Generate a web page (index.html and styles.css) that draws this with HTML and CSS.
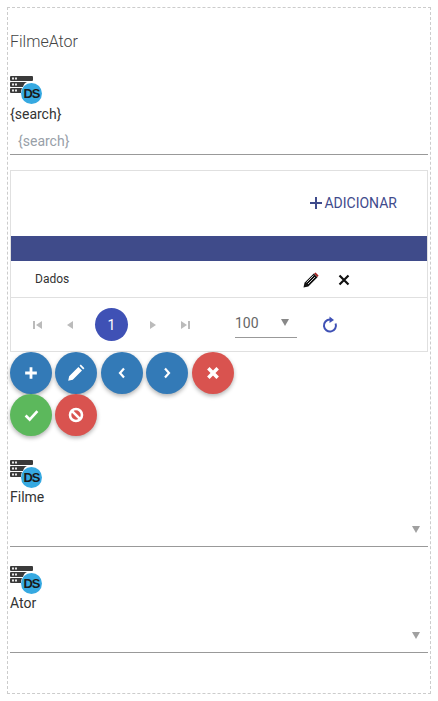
FILE: index.html
```html
<!DOCTYPE html>
<html>

<head>
  <title>FilmeAtor</title>
  <meta name="viewport" content="width=device-width, initial-scale=1.0">
  <link rel="stylesheet" href="styles.css">
</head>

<body>
  <div class="page">
    <h1 class="title">FilmeAtor</h1>

    <div class="field search-field">
      <svg class="ds-icon" viewBox="0 0 33 30">
        <path fill="#3a3a3a" d="M1 1h21q1 0 1 1v3q0 1-1 1H1q-1 0-1-1V2q0-1 1-1zM1 7h16q-3 1-4 5H1q-1 0-1-1V8q0-1 1-1zM1 13h11q-1 2-1 5H1q-1 0-1-1v-3q0-1 1-1z"/>
        <path fill="#e8e8e8" d="M2 2.500h2v2H2zM5 2.500h2v2H5zM2 8.500h2v2H2zM5 8.500h2v2H5zM2 14.500h2v2H2zM5 14.500h2v2H5z"/>
        <circle cx="21.500" cy="18.500" r="10.500" fill="#36a9e1"/>
        <text x="21.500" y="23" text-anchor="middle" class="ds-text">DS</text>
      </svg>
      <label>{search}</label>
      <div class="search-input">{search}</div>
    </div>

    <div class="panel">
      <div class="panel-top">
        <a class="add-link">
          <svg width="12" height="12" viewBox="0 0 12 12"><path d="M5 0h2v5h5v2H7v5H5V7H0V5h5z" fill="#3f4b8c"/></svg>
          ADICIONAR
        </a>
      </div>
      <div class="band"></div>
      <div class="row">
        <span class="row-text">Dados</span>
        <svg class="row-edit" width="16" height="16" viewBox="0 0 16 16">
          <path d="M.500 15.500l1-4.800L10.800 1.500l3.700 3.700-9.200 9.300z" fill="#111"/>
          <path d="M11.800.900l.8-.4 2.900 2.900-.4.900-.7.600-3.300-3.300z" fill="#a3211f"/>
          <path d="M3.500 10.500l7-7M5 12l7-7" stroke="#fff" stroke-width=".8"/>
        </svg>
        <svg class="row-del" width="12" height="12" viewBox="0 0 12 12"><path d="M1.500 1.500l9 9M10.500 1.500l-9 9" stroke="#111" stroke-width="2.200"/></svg>
      </div>
      <div class="pager">
        <svg class="pg-first" width="9" height="8" viewBox="0 0 9 8"><path d="M0 0h2v8H0zM9 0v8L3 4z" fill="#bbb"/></svg>
        <svg class="pg-prev" width="6" height="8" viewBox="0 0 6 8"><path d="M6 0v8L0 4z" fill="#bbb"/></svg>
        <span class="pg-current">1</span>
        <svg class="pg-next" width="6" height="8" viewBox="0 0 6 8"><path d="M0 0v8l6-4z" fill="#bbb"/></svg>
        <svg class="pg-last" width="9" height="8" viewBox="0 0 9 8"><path d="M0 0v8l6-4zM7 0h2v8H7z" fill="#bbb"/></svg>
        <div class="pg-size"><span>100</span><i class="arrow arrow-dark"></i></div>
        <svg class="pg-refresh" width="16" height="18" viewBox="0 0 16 18">
          <path d="M8 3.500A6 6 0 1 0 13.600 7.500" fill="none" stroke="#3f51b5" stroke-width="2"/>
          <path d="M7.500 0.500L12 4 7.500 7z" fill="#3f51b5"/>
        </svg>
      </div>
    </div>

    <div class="buttons">
      <button class="btn btn-blue"><svg width="14" height="14" viewBox="0 0 12 12"><path d="M4.800 1h2.400v3.800H11v2.400H7.200V11H4.800V7.200H1V4.800h3.800z" fill="#fff"/></svg></button>
      <button class="btn btn-blue"><svg width="18" height="18" viewBox="0 0 15 15"><path d="M1 14l.8-3.800L9.500 2.500l3 3-7.700 7.700zM10.500 1.500l1-1 3 3-1 1z" fill="#fff"/></svg></button>
      <button class="btn btn-blue"><svg width="8" height="12" viewBox="0 0 8 12"><path d="M6 1.500L2 6l4 4.500" fill="none" stroke="#fff" stroke-width="2.200"/></svg></button>
      <button class="btn btn-blue"><svg width="8" height="12" viewBox="0 0 8 12"><path d="M2 1.500L6 6l-4 4.500" fill="none" stroke="#fff" stroke-width="2.200"/></svg></button>
      <button class="btn btn-red"><svg width="14" height="14" viewBox="0 0 12 12"><path d="M2 2l8 8M10 2l-8 8" stroke="#fff" stroke-width="3"/></svg></button>
      <button class="btn btn-green"><svg width="15" height="13" viewBox="0 0 14 12"><path d="M1.500 6l3.800 3.800L12.500 2" fill="none" stroke="#fff" stroke-width="2.500"/></svg></button>
      <button class="btn btn-red"><svg width="16" height="16" viewBox="0 0 16 16"><circle cx="8" cy="8" r="6" fill="none" stroke="#fff" stroke-width="2.600"/><path d="M3.800 3.800l8.400 8.400" stroke="#fff" stroke-width="2.600"/></svg></button>
    </div>

    <div class="field select-field first-select">
      <svg class="ds-icon" viewBox="0 0 33 30">
        <path fill="#3a3a3a" d="M1 1h21q1 0 1 1v3q0 1-1 1H1q-1 0-1-1V2q0-1 1-1zM1 7h16q-3 1-4 5H1q-1 0-1-1V8q0-1 1-1zM1 13h11q-1 2-1 5H1q-1 0-1-1v-3q0-1 1-1z"/>
        <path fill="#e8e8e8" d="M2 2.500h2v2H2zM5 2.500h2v2H5zM2 8.500h2v2H2zM5 8.500h2v2H5zM2 14.500h2v2H2zM5 14.500h2v2H5z"/>
        <circle cx="21.500" cy="18.500" r="10.500" fill="#36a9e1"/>
        <text x="21.500" y="23" text-anchor="middle" class="ds-text">DS</text>
      </svg>
      <label>Filme</label>
      <div class="select-input"><i class="arrow"></i></div>
    </div>

    <div class="field select-field">
      <svg class="ds-icon" viewBox="0 0 33 30">
        <path fill="#3a3a3a" d="M1 1h21q1 0 1 1v3q0 1-1 1H1q-1 0-1-1V2q0-1 1-1zM1 7h16q-3 1-4 5H1q-1 0-1-1V8q0-1 1-1zM1 13h11q-1 2-1 5H1q-1 0-1-1v-3q0-1 1-1z"/>
        <path fill="#e8e8e8" d="M2 2.500h2v2H2zM5 2.500h2v2H5zM2 8.500h2v2H2zM5 8.500h2v2H5zM2 14.500h2v2H2zM5 14.500h2v2H5z"/>
        <circle cx="21.500" cy="18.500" r="10.500" fill="#36a9e1"/>
        <text x="21.500" y="23" text-anchor="middle" class="ds-text">DS</text>
      </svg>
      <label>Ator</label>
      <div class="select-input"><i class="arrow"></i></div>
    </div>
  </div>
</body>

</html>
```

FILE: styles.css
```css
html,
body {
  margin: 0;
  padding: 0;
  background: white;
}

body {
  font-family: Roboto, sans-serif;
  color: #333;
  font-size: 14px;
}

.ds-text {
  font-family: "Liberation Sans", sans-serif;
  font-size: 13px;
  font-weight: bold;
  letter-spacing: -1px;
  fill: #1a1a1a;
}

.page {
  box-sizing: border-box;
  width: 424px;
  height: 687px;
  margin: 7px 0 0 7px;
  padding: 0 2px;
  border: 1px dashed #ccc;
}

.title {
  margin: 24px 0 0 0;
  font-size: 16px;
  line-height: 19px;
  font-weight: 300;
  color: #444;
}

.field {
  display: flex;
  flex-direction: column;
}

.ds-icon {
  display: block;
  width: 33px;
  height: 30px;
}

.field label {
  font-size: 14px;
  line-height: 16px;
}

.search-field {
  margin-top: 24px;
}

.search-field label {
  margin-top: 1px;
}

.search-input {
  height: 27px;
  margin-top: 6px;
  padding: 5px 0 0 8px;
  box-sizing: border-box;
  border-bottom: 1px solid #999;
  color: #98a0a8;
  font-size: 14px;
  line-height: 16px;
}

.panel {
  margin-top: 15px;
  border: 1px solid #e0e0e0;
}

.panel-top {
  height: 65px;
  display: flex;
  justify-content: flex-end;
  padding: 24px 30px 0 0;
  box-sizing: border-box;
}

.add-link {
  display: flex;
  align-items: center;
  gap: 2px;
  height: 16px;
  color: #3f4b8c;
  font-size: 14px;
}

.band {
  height: 25px;
  background: #3f4b8a;
}

.row {
  height: 36px;
  display: flex;
  align-items: center;
  border-bottom: 1px solid #e0e0e0;
  font-size: 12px;
}

.row-text {
  margin-left: 24px;
  width: 268px;
}

.row-edit {
  margin-top: 2px;
}

.row-del {
  margin-left: 19px;
  margin-top: 2px;
}

.pager {
  height: 53px;
  display: flex;
  align-items: center;
}

.pg-first {
  margin-left: 22px;
}

.pg-prev {
  margin-left: 25px;
}

.pg-current {
  width: 33px;
  height: 33px;
  margin-left: 22px;
  border-radius: 50%;
  background: #3f51b5;
  color: white;
  font-size: 14px;
  display: flex;
  justify-content: center;
  align-items: center;
}

.pg-next {
  margin-left: 22px;
}

.pg-last {
  margin-left: 25px;
}

.pg-size {
  width: 62px;
  height: 27px;
  margin-left: 45px;
  margin-top: -1px;
  padding: 0 8px 2px 0;
  box-sizing: border-box;
  border-bottom: 1px solid #999;
  display: flex;
  justify-content: space-between;
  align-items: center;
  color: #666;
  font-size: 14px;
}

.pg-refresh {
  margin-left: 25px;
}

.arrow {
  display: block;
  width: 0;
  height: 0;
  border-left: 4px solid transparent;
  border-right: 4px solid transparent;
  border-top: 7px solid #a0a0a0;
}

.arrow-dark {
  border-top-color: #888;
}

.buttons {
  display: flex;
  flex-wrap: wrap;
  gap: 0 3.400px;
  width: 240px;
}

.btn {
  width: 42px;
  height: 42px;
  padding: 0;
  border: none;
  border-radius: 50%;
  display: flex;
  justify-content: center;
  align-items: center;
  box-shadow: 0 2px 4px rgba(0, 0, 0, 0.3);
}

.btn-blue {
  background: #337ab7;
}

.btn-red {
  background: #d9534f;
}

.btn-green {
  background: #5cb85c;
}

.first-select {
  margin-top: 23px;
}

.select-field {
  margin-bottom: 18px;
}

.select-input {
  height: 42px;
  box-sizing: border-box;
  border-bottom: 1px solid #999;
  display: flex;
  justify-content: flex-end;
  align-items: flex-end;
  padding: 0 8px 13px 0;
}
```
